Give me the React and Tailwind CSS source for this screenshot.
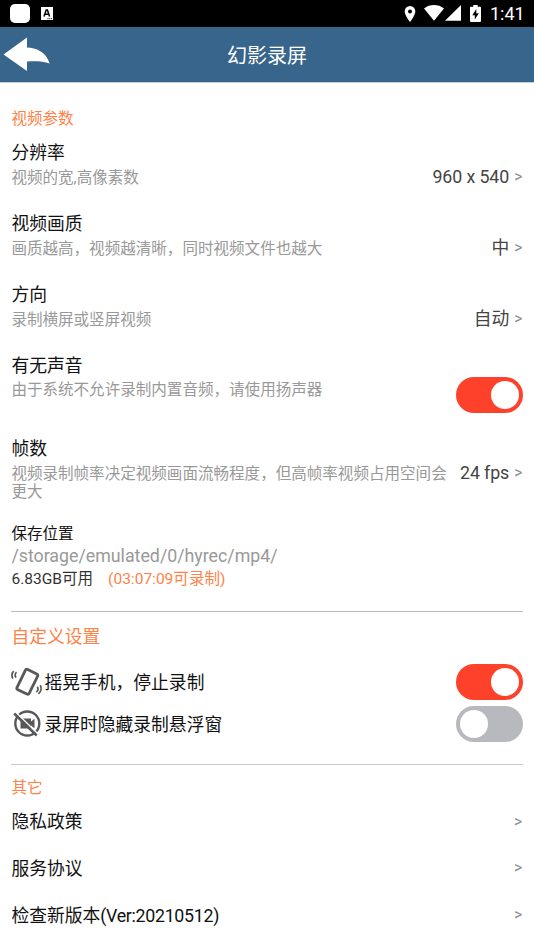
import React, { useState } from 'react';

const videoSettings = [
    { title: '分辨率', desc: '视频的宽,高像素数', value: '960 x 540' },
    { title: '视频画质', desc: '画质越高，视频越清晰，同时视频文件也越大', value: '中' },
    { title: '方向', desc: '录制横屏或竖屏视频', value: '自动' },
];

const otherItems = [
    { label: '隐私政策' },
    { label: '服务协议' },
    { label: '检查新版本', version: '(Ver:20210512)' },
];

const StatusBar = () => (
    <div className="flex h-[27px] items-center bg-black pl-[10px] pr-[10px] text-white">
        <div className="h-[19px] w-[20px] rounded-[5px] bg-white" />
        <svg className="ml-[11px]" width="12" height="13" viewBox="0 0 12 13">
            <rect width="12" height="13" fill="#fff" />
            <path d="M3 9.5 5.2 3h1.2l2.2 6.5M4 7.3h3.6" fill="none" stroke="#000" strokeWidth="1.5" />
            <path d="M6.5 11.7h4.5" stroke="#000" strokeWidth="1" strokeDasharray="1 .8" />
        </svg>
        <svg className="ml-auto" width="12" height="16" viewBox="0 0 12 16">
            <path fillRule="evenodd" d="M6 0a5.3 5.3 0 0 0-5.3 5.4C.7 9.3 6 16 6 16s5.3-6.7 5.3-10.6A5.3 5.3 0 0 0 6 0Zm0 3.5a2 2 0 1 1 0 4 2 2 0 0 1 0-4Z" fill="#fff" />
        </svg>
        <svg className="ml-[8px] -mt-px" width="20" height="16" viewBox="0 0 20 16">
            <path d="M0 3.4C5.8-1.1 14.2-1.1 20 3.4L10 15.7Z" fill="#fff" />
        </svg>
        <svg className="ml-[1px] -mt-px" width="16" height="16" viewBox="0 0 16 16">
            <path d="M0 15.7 16 0v15.7Z" fill="#fff" />
        </svg>
        <svg className="ml-[9px] -mt-px" width="11" height="17" viewBox="0 0 11 17">
            <path d="M3.3 0h4.4v1.7H10a1 1 0 0 1 1 1V16a1 1 0 0 1-1 1H1a1 1 0 0 1-1-1V2.7a1 1 0 0 1 1-1h2.3Z" fill="#fff" />
            <path d="M6.3 4 2.3 10.2h2.5v4.4l4-6.3H6.3Z" fill="#000" />
        </svg>
        <span className="ml-[9px] w-[34px] whitespace-nowrap text-[18px] leading-[27px]">1:41</span>
    </div>
);

const Header = () => (
    <div className="grid h-14 grid-cols-[1fr_auto_1fr] items-center border-b border-[#c3d0dc] bg-[#38658b]">
        <svg className="-mt-px ml-[3px]" width="48" height="34" viewBox="0 0 48 34">
            <path d="M.5 17.5 24 .5v10C33 11 43 14.5 46.7 26.500 40 24 32 24 24 24.500v9.500Z" fill="#fff" />
        </svg>
        <h1 className="pt-[2px] text-[20px] leading-[30px] text-white">幻影录屏</h1>
    </div>
);

const Arrow = () => <span className="ml-[5px] mr-[.5px] text-[15.6px] text-[#8c8c8c]">&gt;</span>;

const Toggle = ({ on, onChange }) => (
    <button
        type="button"
        role="switch"
        aria-checked={on}
        onClick={() => onChange(!on)}
        className={`flex h-[36px] w-[67px] shrink-0 items-center rounded-full px-[4px] ${on ? 'justify-end bg-[#fd412b]' : 'justify-start bg-[#b8b9bf]'}`}
    >
        <span className="h-[28px] w-[28px] rounded-full bg-white" />
    </button>
);

const ShakeIcon = () => (
    <svg width="33" height="30" viewBox="0 0 33 30" fill="none" stroke="#585858">
        <rect x="9.5" y="3.6" width="13.6" height="22.4" rx="1.8" strokeWidth="2.8" transform="rotate(26 16.3 14.8)" />
        <path d="M5.5 5.2C4 6.6 3.8 8.6 4.9 10.600M2.700 4.200C.7 6.200.5 9 1.900 11.700" strokeWidth="1.700" />
        <path d="M26.300 19.700c1.200 1.900.8 3.900-1 5.300M29.300 18.200c1.600 3.300.7 6.500-1.900 8.700" strokeWidth="1.700" />
    </svg>
);

const HideCameraIcon = () => (
    <svg width="33" height="30" viewBox="0 0 33 30" fill="none">
        <circle cx="16.300" cy="14.500" r="12" stroke="#585858" strokeWidth="2.400" />
        <path d="M9.500 9.500h10.500v3l3.500-2.800v9.600l-3.500-2.800v3H9.500Z" fill="#585858" />
        <path d="M5.500 4 27.500 25.500" stroke="#fff" strokeWidth="1.600" />
        <path d="M3.200 4.500 25.700 26.500" stroke="#585858" strokeWidth="2.500" />
    </svg>
);

const SettingRow = ({ title, desc, value }) => (
    <div className="h-[71px]">
        <h3 className="text-[17.8px] leading-6 text-[#111]">{title}</h3>
        <div className="flex h-[27px] items-center justify-between">
            <p className="-mt-px text-[15.56px] leading-6 text-[#999]">{desc}</p>
            <p className="-mt-[3px] flex items-center text-[17.8px] leading-6 tracking-[-.1px] text-[#444]">
                {value}
                <Arrow />
            </p>
        </div>
    </div>
);

const App = () => {
    const [sound, setSound] = useState(true);
    const [shake, setShake] = useState(true);
    const [hideFloat, setHideFloat] = useState(false);

    return (
        <div className="h-[950px] w-[534px] overflow-hidden bg-white font-[Roboto,'Noto_Sans_CJK_SC',sans-serif]">
            <StatusBar />
            <Header />
            <div className="pl-[11.4px] pr-[11.3px] pt-[24px]">
                <h2 className="mb-[10px] text-[15.56px] leading-6 text-[#ff8249]">视频参数</h2>
                {videoSettings.map(item => (
                    <SettingRow key={item.title} {...item} />
                ))}

                {/* Sonido */}
                <div className="flex h-[83.4px] justify-between">
                    <div>
                        <h3 className="text-[17.8px] leading-6 text-[#111]">有无声音</h3>
                        <p className="text-[15.56px] leading-6 text-[#999]">由于系统不允许录制内置音频，请使用扬声器</p>
                    </div>
                    <div className="pt-[23px]">
                        <Toggle on={sound} onChange={setSound} />
                    </div>
                </div>

                <div className="h-[84.6px]">
                    <h3 className="text-[17.8px] leading-6 text-[#111]">帧数</h3>
                    <div className="flex justify-between pt-1">
                        <p className="w-[437px] text-[15.56px] leading-[18px] text-[#999]">
                            视频录制帧率决定视频画面流畅程度，但高帧率视频占用空间会更大
                        </p>
                        <p className="-mt-px flex h-[18px] items-center whitespace-nowrap text-[17.8px] tracking-[-.1px] text-[#444]">
                            24 fps
                            <Arrow />
                        </p>
                    </div>
                </div>

                <div className="h-[90px] border-b border-[#bbb]">
                    <h3 className="text-[15.56px] leading-6 text-[#111]">保存位置</h3>
                    <p className="-mt-px text-[17.8px] leading-[22px] text-[#999]">/storage/emulated/0/hyrec/mp4/</p>
                    <p className="flex gap-[15px] text-[15.56px] leading-6 text-[#333]">
                        <span>6.83GB可用</span>
                        <span className="text-[#ff8249]">(03:07:09可录制)</span>
                    </p>
                </div>

                <div className="h-[153px] border-b border-[#c8c8c8] pt-[13px]">
                    <h2 className="text-[17.8px] leading-6 text-[#ff8249]">自定义设置</h2>
                    <div className="mt-[15px] flex h-[36px] items-center">
                        <ShakeIcon />
                        <span className="pt-[2px] text-[17.8px] leading-6 text-[#111]">摇晃手机，停止录制</span>
                        <div className="ml-auto">
                            <Toggle on={shake} onChange={setShake} />
                        </div>
                    </div>
                    <div className="mt-[6px] flex h-[36px] items-center">
                        <HideCameraIcon />
                        <span className="pt-[2px] text-[17.8px] leading-6 text-[#111]">录屏时隐藏录制悬浮窗</span>
                        <div className="ml-auto">
                            <Toggle on={hideFloat} onChange={setHideFloat} />
                        </div>
                    </div>
                </div>

                <h2 className="pt-[11px] text-[15.56px] leading-6 text-[#ff8249]">其它</h2>
                <ul className="-mt-px">
                    {otherItems.map(item => (
                        <li key={item.label} className="flex h-[46.8px] items-center justify-between text-[17.8px] text-[#111]">
                            <p>
                                {item.label}
                                <span className="tracking-[-.3px]">{item.version}</span>
                            </p>
                            <Arrow />
                        </li>
                    ))}
                </ul>
            </div>
        </div>
    );
};

export default App;
